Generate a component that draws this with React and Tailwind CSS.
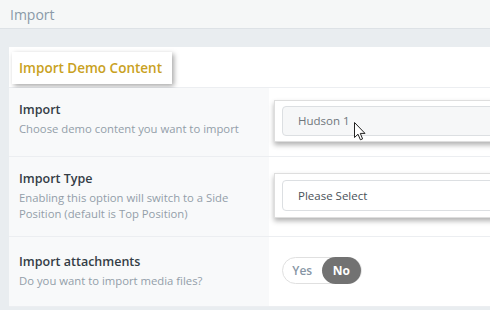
import React from 'react';

const Cursor = () => (
  <svg className="absolute left-[354px] top-[122px]" width="12" height="19" viewBox="0 0 12 19">
    <path d="M0.5 0.5 L0.5 15.5 L4 12.2 L6.4 17.8 L8.6 16.9 L6.3 11.4 L11 11.4 Z" fill="#fff" stroke="#222" strokeWidth="1" strokeLinejoin="round" />
  </svg>
);

const Row = ({ title, desc, height, pad = 'pt-[13px]', children }) => (
  <div className={`flex border-b border-[#eceef1] ${height}`}>
    <div className={`w-[260px] shrink-0 bg-[#f8f9fa] pl-[10px] ${pad}`}>
      <div className="text-[12.5px] font-semibold leading-[18px] text-[#343d46]">{title}</div>
      <div className="mt-[2px] text-[11.3px] leading-[16px] text-[#939ea9]">{desc}</div>
    </div>
    <div className="min-w-0 flex-1 bg-white">{children}</div>
  </div>
);

export default function App() {
  return (
    <div className="relative h-[310px] w-[490px] overflow-hidden bg-[#e9edf0] font-['Open_Sans',sans-serif]">
      <div className="flex h-[29px] items-center border-b border-[#dde2e6] bg-[#f5f7f7] pl-[10px] text-[14px] text-[#8a9aa8]">
        Import
      </div>
      <div className="ml-[9px] mt-[18px] bg-white">
        <div className="h-[41px] border-b border-[#eceef1] pl-[3px] pt-[5px]">
          <div className="flex h-[32px] w-[160px] items-center bg-white pl-[7px] text-[13.5px] font-semibold text-[#c9a122] shadow-[2px_2px_5px_rgba(0,0,0,0.35)]">
            Import Demo Content
          </div>
        </div>
        <Row title="Import" desc="Choose demo content you want to import" height="h-[69px]">
          <div className="-mr-[20px] ml-[5px] mt-[12px] border border-[#dedede] bg-white py-[5px] pl-[7px] shadow-[0_3px_5px_rgba(0,0,0,0.3)]">
            <div className="flex h-[30px] items-center rounded-[4px] border border-[#dcdfe2] bg-[#f6f7f8] pl-[15px] text-[11.5px] text-[#6f767c]">
              Hudson 1
            </div>
          </div>
        </Row>
        <Row
          title="Import Type"
          desc={<>Enabling this option will switch to a Side<br />Position (default is Top Position)</>}
          height="h-[80px]"
        >
          <div className="-mr-[20px] ml-[5px] mt-[16px] border border-[#dedede] bg-white py-[6px] pl-[7px] shadow-[0_3px_5px_rgba(0,0,0,0.3)]">
            <div className="flex h-[31px] items-center rounded-[4px] border border-[#dcdfe2] bg-white pl-[15px] text-[11.5px] text-[#4a5158]">
              Please Select
            </div>
          </div>
        </Row>
        <Row title="Import attachments" desc="Do you want to import media files?" height="h-[70px]" pad="pt-[16px]">
          <div className="ml-[13px] mt-[20px] flex h-[27px] w-[80px] items-center rounded-full border border-[#e0e0e0] bg-white">
            <span className="w-[39px] text-center text-[12px] font-semibold text-[#8796a5]">Yes</span>
            <span className="flex h-[27px] w-[40px] items-center justify-center rounded-full bg-[#727272] text-[12px] font-bold text-white">No</span>
          </div>
        </Row>
      </div>
      <Cursor />
    </div>
  );
}
